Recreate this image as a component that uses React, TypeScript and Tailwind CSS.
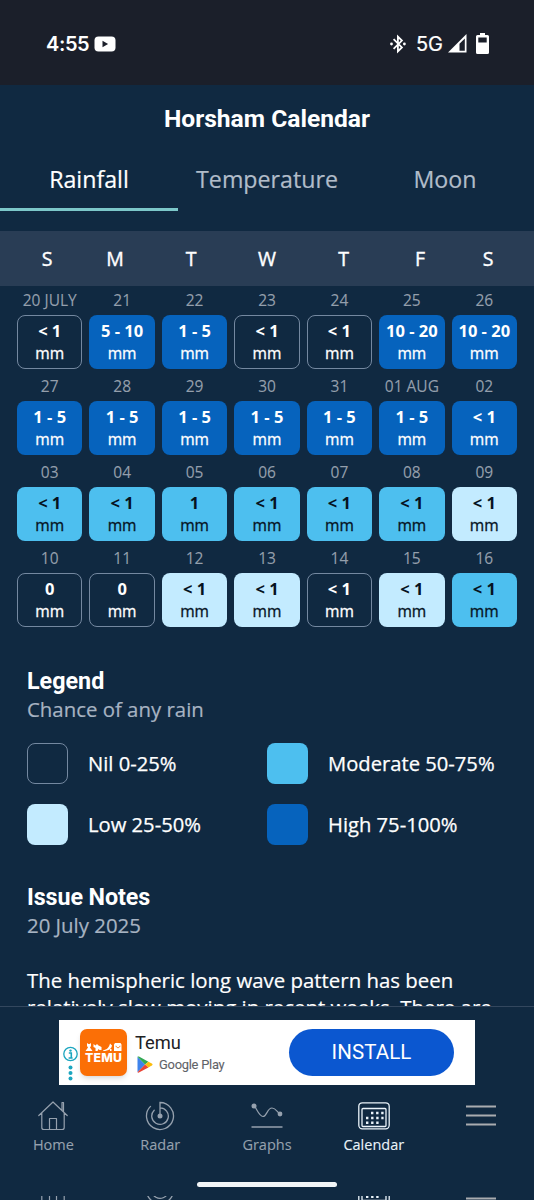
import React from "react";

type Level = "nil" | "low" | "moderate" | "high";

interface Day {
  date: string;
  amount: string;
  level: Level;
}

const day = (date: string, amount: string, level: Level): Day => ({ date, amount, level });

const days: Day[] = [
  day("20 JULY", "< 1", "nil"),
  day("21", "5 - 10", "high"),
  day("22", "1 - 5", "high"),
  day("23", "< 1", "nil"),
  day("24", "< 1", "nil"),
  day("25", "10 - 20", "high"),
  day("26", "10 - 20", "high"),
  day("27", "1 - 5", "high"),
  day("28", "1 - 5", "high"),
  day("29", "1 - 5", "high"),
  day("30", "1 - 5", "high"),
  day("31", "1 - 5", "high"),
  day("01 AUG", "1 - 5", "high"),
  day("02", "< 1", "high"),
  day("03", "< 1", "moderate"),
  day("04", "< 1", "moderate"),
  day("05", "1", "moderate"),
  day("06", "< 1", "moderate"),
  day("07", "< 1", "moderate"),
  day("08", "< 1", "moderate"),
  day("09", "< 1", "low"),
  day("10", "0", "nil"),
  day("11", "0", "nil"),
  day("12", "< 1", "low"),
  day("13", "< 1", "low"),
  day("14", "< 1", "nil"),
  day("15", "< 1", "low"),
  day("16", "< 1", "moderate"),
];

const levelStyle: Record<Level, string> = {
  nil: "border-[1.5px] border-[#7488a0] text-white",
  low: "bg-[#c3ebff] text-[#06131f]",
  moderate: "bg-[#4dbfef] text-[#06131f]",
  high: "bg-[#0663bd] text-white",
};

const weekdays = ["S", "M", "T", "W", "T", "F", "S"];

function StatusBar() {
  return (
    <div className="flex h-[85px] shrink-0 items-center bg-[#1b1f2a] pt-[3px] pl-[46px] pr-[45px] font-['Inter',sans-serif] text-white">
      <span className="w-[44px] whitespace-nowrap text-[20px] leading-none font-semibold tracking-[-0.4px]">4:55</span>
      <svg className="ml-[4px] h-[16px] w-[22px]" viewBox="0 0 22 16">
        <rect x="0.5" y="0.5" width="21" height="15" rx="4" fill="#fff" />
        <path d="M8.5 4.8v6.4l5.6-3.2z" fill="#1b1f2a" />
      </svg>
      <svg className="ml-auto h-[20px] w-[16px]" viewBox="0 0 16 20" fill="none" stroke="#fff" strokeWidth="1.8">
        <path d="M3.6 5.2l8.3 8.2-4 4V2.6l4 4-8.3 8.2" />
        <circle cx="1.5" cy="10" r="1.4" fill="#fff" stroke="none" />
        <circle cx="14.4" cy="10" r="1.4" fill="#fff" stroke="none" />
      </svg>
      <span className="ml-[10px] w-[27px] whitespace-nowrap text-[20px] leading-none tracking-[-0.2px] [-webkit-text-stroke:0.2px]">5G</span>
      <svg className="mt-[-1px] ml-[5px] h-[19px] w-[19px]" viewBox="0 0 19 19">
        <path d="M18.5 0v18.5H0z" fill="#fff" />
        <path d="M16.8 4.5v12.3h-5.3V9.8z" fill="#1b1f2a" />
      </svg>
      <svg className="mt-[-1px] ml-[9px] h-[21px] w-[13px]" viewBox="0 0 13 21">
        <path d="M4 0h5v2h2.5A1.5 1.5 0 0 1 13 3.500v16A1.500 1.500 0 0 1 11.500 21h-10A1.500 1.500 0 0 1 0 19.500v-16A1.500 1.500 0 0 1 1.500 2H4z" fill="#fff" />
        <rect x="2.300" y="4.500" width="8.400" height="5" fill="#1b1f2a" />
      </svg>
    </div>
  );
}

function Tabs() {
  return (
    <div className="grid h-[58px] grid-cols-3 text-center text-[23.2px] leading-[53px] text-[#b1bcc9] [-webkit-text-stroke:0.2px]">
      <div className="border-b-[3px] border-[#7cc7c9] text-white">Rainfall</div>
      <div>Temperature</div>
      <div>Moon</div>
    </div>
  );
}

function Calendar() {
  return (
    <>
      <div className="grid h-[55px] grid-cols-[64px_72px_80px_72px_81px_72px_64px] bg-[#293d55] pl-[15px] text-center text-[19.5px] leading-[55px] text-white [-webkit-text-stroke:0.4px]">
        {weekdays.map((d, i) => (
          <span key={i}>{d}</span>
        ))}
      </div>
      <div className="grid grid-cols-7 gap-x-[7px] px-[17px]">
        {days.map((d) => (
          <div key={d.date} className="flex h-[86px] flex-col pt-[3px]">
            <div className="h-[26px] text-center text-[15.5px] leading-[23px] whitespace-nowrap text-[#949fac] [-webkit-text-stroke:0.1px]">{d.date}</div>
            <div className={`flex h-[54px] flex-col justify-center rounded-[8px] text-center leading-[22px] whitespace-nowrap ${levelStyle[d.level]}`}>
              <b className="text-[16.5px] font-bold">{d.amount}</b>
              <span className="text-[15.6px] [-webkit-text-stroke:0.3px]">mm</span>
            </div>
          </div>
        ))}
      </div>
    </>
  );
}

function LegendItem({ level, label }: { level: Level; label: string }) {
  return (
    <div className="flex h-[41px] items-center gap-[20px]">
      <div className={`h-[41px] w-[41px] rounded-[8px] ${levelStyle[level]}`} />
      <span className="pb-[1px] text-[20.2px] whitespace-nowrap text-white [-webkit-text-stroke:0.25px]">{label}</span>
    </div>
  );
}

function Legend() {
  return (
    <section className="px-[27px] pt-[36px]">
      <h2 className="font-['Roboto',sans-serif] text-[23.3px] leading-[30px] font-bold text-white">Legend</h2>
      <p className="text-[20.4px] leading-[26px] text-[#a7b3c2] [-webkit-text-stroke:0.2px]">Chance of any rain</p>
      <div className="mt-[21px] grid grid-cols-2 gap-y-[20px]">
        <LegendItem level="nil" label="Nil 0-25%" />
        <LegendItem level="moderate" label="Moderate 50-75%" />
        <LegendItem level="low" label="Low 25-50%" />
        <LegendItem level="high" label="High 75-100%" />
      </div>
    </section>
  );
}

function Notes() {
  return (
    <section className="px-[27px] pt-[37px]">
      <h2 className="font-['Roboto',sans-serif] text-[23.3px] leading-[30px] font-bold tracking-[-0.1px] text-white">Issue Notes</h2>
      <p className="text-[20.400px] leading-[27px] text-[#a7b3c2] [-webkit-text-stroke:0.2px]">20 July 2025</p>
      <p className="mt-[28px] text-[20.400px] leading-[27px] whitespace-nowrap text-white [-webkit-text-stroke:0.2px]">
        The hemispheric long wave pattern has been
        <br />
        relatively slow moving in recent weeks. There are
      </p>
    </section>
  );
}

function Ad() {
  return (
    <div className="ml-[59px] flex h-[65px] w-[416px] items-center bg-white font-['Roboto',sans-serif]">
      <svg className="mt-[22px] ml-[4px] h-[36px] w-[15px]" viewBox="0 0 15 36">
        <circle cx="7.500" cy="8" r="6.700" fill="#fff" stroke="#1ba5bf" strokeWidth="1.300" />
        <circle cx="7.500" cy="4.600" r="1.200" fill="#1ba5bf" />
        <path d="M5.800 7h2.500v4.800M5.600 12h4" fill="none" stroke="#1ba5bf" strokeWidth="1.600" />
        <circle cx="7.500" cy="21.500" r="2" fill="#1ba5bf" />
        <circle cx="7.500" cy="27" r="2" fill="#1ba5bf" />
        <circle cx="7.500" cy="32.500" r="2" fill="#1ba5bf" />
      </svg>
      <div className="ml-[2px] flex h-[47px] w-[47px] flex-col items-center rounded-[7px] bg-[#fb6f06] pt-[14px] text-white shadow-md">
        <svg className="h-[9px] w-[37px]" viewBox="0 0 37 9" fill="#fff">
          <path d="M2 0l1.500 1h1L6 0v3L5 4.500 7.500 8H.5L3 4.500 2 3z" />
          <path d="M8.500 1l2 1.500L12 1l1.500 1.500L16.500 4v3h-2l-1-1-1 2h-2V5L8.500 4z" />
          <path d="M18 7.500c4-1 6-3 7-7L27 2.500c-.5 3-3 5.500-9 5.500zM25 6h1.500v2H25zM30 0h5.500l1 1.500V8h-7.500V1.500z" />
          <path d="M31 2.800c.5 2.500 3.500 2.500 4 0" fill="none" stroke="#fb6f06" strokeWidth="1" />
        </svg>
        <span className="font-['Inter',sans-serif] text-[12.300px] leading-[12px] font-extrabold tracking-[0.200px]">TEMU</span>
      </div>
      <div className="ml-[8px] w-[154px]">
        <div className="text-[18.300px] leading-[24px] text-[#202124]">Temu</div>
        <div className="flex h-[19px] items-center gap-[6px]">
          <svg className="ml-[2px] h-[17px] w-[16px]" viewBox="0 0 16 17">
            <path d="M.5.8v15.400L8 8.500z" fill="#3e83ec" />
            <path d="M.5.8C1 .2 1.800.3 2.400.7l9 5L8 8.500z" fill="#31a853" />
            <path d="M11.400 5.700l3.400 1.900c1 .6 1 1.300 0 1.900l-3.400 1.900L8 8.500z" fill="#fbbc0c" />
            <path d="M.5 16.200c.5.600 1.300.5 1.900.1l9-4.900L8 8.500z" fill="#ea4335" />
          </svg>
          <span className="text-[12.900px] tracking-[-0.250px] whitespace-nowrap text-[#5f6368] [-webkit-text-stroke:0.1px]">Google Play</span>
        </div>
      </div>
      <div className="flex h-[47px] w-[165px] items-center justify-center rounded-full bg-[#0b57d0] text-[20.500px] tracking-[0.100px] text-white">INSTALL</div>
    </div>
  );
}

function HomeIcon() {
  return (
    <svg className="h-[30px] w-[30px]" viewBox="0 0 30 30" fill="none" stroke="currentColor" strokeWidth="1.200">
      <path d="M.8 14.500L15 1l14.200 13.500M3.800 12v14.500a2 2 0 0 0 2 2h18.400a2 2 0 0 0 2-2V12M11.500 28.500V17.500h7v11M24 9V1.500h1.500V10.500" strokeLinejoin="round" strokeLinecap="round" />
    </svg>
  );
}

function RadarIcon() {
  return (
    <svg className="h-[30px] w-[30px]" viewBox="0 0 30 30" fill="none" stroke="currentColor" strokeWidth="1.300" strokeLinecap="round">
      <path d="M15 14V1.500A13.500 13.500 0 1 1 5.500 5.400M15 6.800A8.300 8.300 0 1 1 9.200 9.200" />
      <circle cx="15" cy="15" r="2.500" fill="currentColor" stroke="none" />
    </svg>
  );
}

function GraphIcon() {
  return (
    <svg className="h-[30px] w-[32px]" viewBox="0 0 32 30" fill="none" stroke="currentColor" strokeWidth="1.200">
      <path d="M3 4.500C6 8 8 15.500 12 15.500S16 7 21 7c4 0 5 4 8 6" />
      <circle cx="3" cy="5" r="2.500" fill="currentColor" stroke="none" />
      <circle cx="29" cy="13" r="2.400" fill="currentColor" stroke="none" />
      <path d="M.5 26h31" strokeWidth="1.500" />
    </svg>
  );
}

function CalendarIcon() {
  return (
    <svg className="h-[30px] w-[32px]" viewBox="0 0 32 30" fill="none" stroke="currentColor" strokeWidth="1.300">
      <rect x=".8" y="1.800" width="30.400" height="26" rx="3.500" />
      <rect x="4" y="7.500" width="24" height="18" rx="1" />
      <path d="M13 12h12.600M8 17h17.600M8 21.800h12.600" strokeWidth="2.400" strokeDasharray="2.400 2.700" />
    </svg>
  );
}

function MenuIcon() {
  return (
    <svg className="h-[30px] w-[30px]" viewBox="0 0 30 30" fill="none" stroke="#a9acb0" strokeWidth="2.200">
      <path d="M0 5.500h30M0 14.500h30M0 23.500h30" />
    </svg>
  );
}

const navItems = [
  { label: "Home", Icon: HomeIcon, active: false },
  { label: "Radar", Icon: RadarIcon, active: false },
  { label: "Graphs", Icon: GraphIcon, active: false },
  { label: "Calendar", Icon: CalendarIcon, active: true },
  { label: "", Icon: MenuIcon, active: false },
];

function BottomBar() {
  return (
    <footer className="flex h-[194px] shrink-0 flex-col border-t-[1.500px] border-[#33475e] pt-[13px]">
      <Ad />
      <nav className="mt-[16px] grid h-[81px] grid-cols-5">
        {navItems.map(({ label, Icon, active }) => (
          <div key={label} className={`flex flex-col items-center ${active ? "text-[#eaf3fa]" : "text-[#96a1ae]"}`}>
            <Icon />
            <span className="mt-[3px] text-[14.500px] leading-[22px] [-webkit-text-stroke:0.1px]">{label}</span>
          </div>
        ))}
      </nav>
      <div className="mx-auto h-[5px] w-[140px] rounded-full bg-[#f2f5f7]" />
      <div className="mt-[9px] grid h-[4px] grid-cols-5 overflow-hidden">
        {navItems.map(({ label, Icon, active }) => (
          <div key={label} className={`flex justify-center ${active ? "text-[#eaf3fa]" : "text-[#96a1ae]"}`}>
            <div className="mt-[-21px]">
              <Icon />
            </div>
          </div>
        ))}
      </div>
    </footer>
  );
}

export default function App() {
  return (
    <div className="flex h-[1200px] w-[534px] flex-col overflow-hidden bg-[#102941] font-['Open_Sans',sans-serif]">
      <StatusBar />
      <main className="min-h-0 flex-1 overflow-hidden">
        <h1 className="h-[68px] text-center font-['Roboto',sans-serif] text-[24.600px] leading-[67px] font-bold text-white">Horsham Calendar</h1>
        <Tabs />
        <div className="h-[20px]" />
        <Calendar />
        <Legend />
        <Notes />
      </main>
      <BottomBar />
    </div>
  );
}
